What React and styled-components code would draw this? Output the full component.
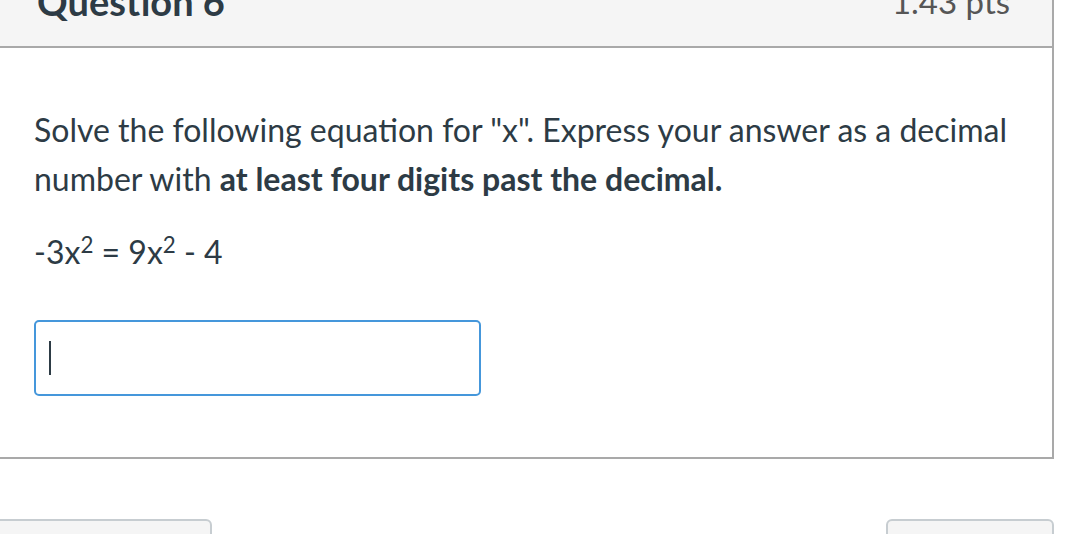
import React from "react";
import styled, { createGlobalStyle } from "styled-components";

const Global = createGlobalStyle`
  html, body { margin: 0; padding: 0; background: #fff; }
  body { font-family: Lato, "Noto Sans", sans-serif; color: #2d3b45; overflow: hidden; }
`;

const Page = styled.div`
  width: 1066px;
  height: 534px;
  overflow: hidden;
  padding-right: 12px;
  box-sizing: border-box;
`;

const Card = styled.section`
  margin-left: -20px;
  border: 2px solid #a9a9a9;
  border-top: none;
  background: #fff;
`;

const Header = styled.header`
  display: flex;
  justify-content: space-between;
  box-sizing: border-box;
  background: #f5f5f5;
  border-bottom: 2px solid #a9a9a9;
  padding: 0 42px 0 55px;
  margin-top: -21px;
  height: 69px;
  overflow: hidden;
`;

const Title = styled.h2`
  margin: 0;
  font-size: 38px;
  line-height: 36px;
  font-weight: 700;
  color: #2d3b45;
  align-self: flex-end;
  margin-bottom: 27px;
`;

const Points = styled.div`
  font-size: 33px;
  line-height: 36px;
  color: #565656;
  align-self: flex-end;
  margin-bottom: 27px;
`;

const Body = styled.div`
  padding: 57px 40px 61px 52px;
`;

const Para = styled.p`
  margin: 0 0 ${(p) => p.$gap || 24}px;
  font-size: 32px;
  line-height: 49px;
  color: #2d3b45;
`;

const Sup = styled.sup`
  font-size: 0.7em;
  line-height: 0;
  vertical-align: 0.5em;
`;

const AnswerBox = styled.div`
  width: 447px;
  height: 76px;
  box-sizing: border-box;
  border: 2px solid #4597db;
  border-radius: 5px;
  display: flex;
  align-items: center;
  padding-left: 13px;
  background: #fff;
`;

const Caret = styled.span`
  display: block;
  width: 2px;
  height: 34px;
  background: #2d3b45;
`;

const Footer = styled.div`
  display: flex;
  justify-content: space-between;
  margin-top: 60px;
  margin-left: -20px;
`;

const NavButton = styled.button`
  width: ${(p) => p.$w}px;
  height: 40px;
  background: #f5f5f5;
  border: 2px solid #c7cdd1;
  border-radius: 6px;
  padding: 0;
`;

export default function App() {
  return (
    <>
      <Global />
      <Page>
        <Card>
          <Header>
            <Title>Question 6</Title>
            <Points>1.43 pts</Points>
          </Header>
          <Body>
            <Para>
              Solve the following equation for "x". Express your answer as a decimal number with{" "}
              <strong>at least four digits past the decimal.</strong>
            </Para>
            <Para $gap={44}>
              -3x<Sup>2</Sup> = 9x<Sup>2</Sup> - 4
            </Para>
            <AnswerBox>
              <Caret />
            </AnswerBox>
          </Body>
        </Card>
        <Footer>
          <NavButton $w={232} aria-label="Previous" />
          <NavButton $w={168} aria-label="Next" />
        </Footer>
      </Page>
    </>
  );
}
